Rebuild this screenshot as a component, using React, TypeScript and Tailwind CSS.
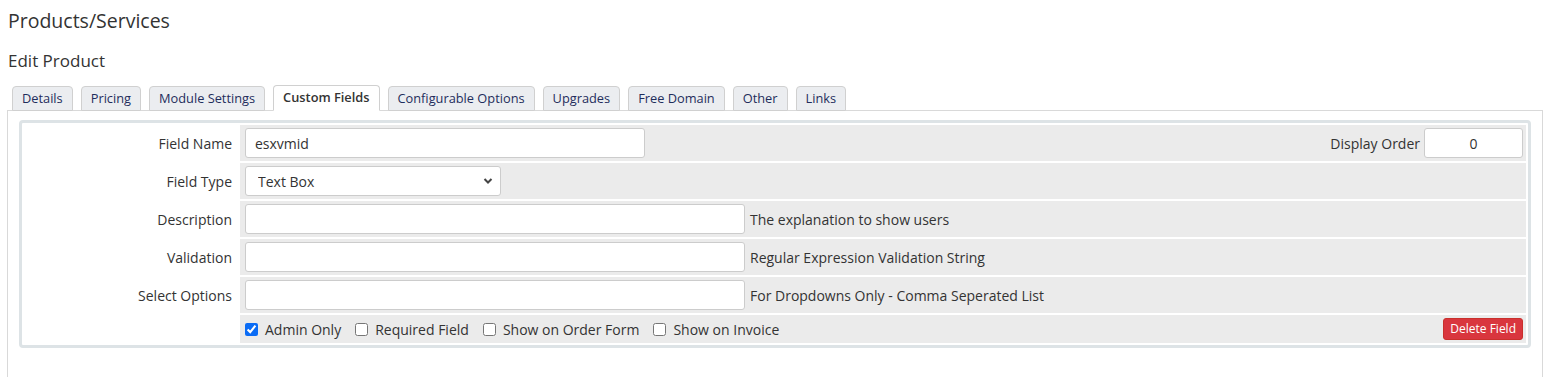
import React from "react";

const tabs = [
  "Details",
  "Pricing",
  "Module Settings",
  "Custom Fields",
  "Configurable Options",
  "Upgrades",
  "Free Domain",
  "Other",
  "Links",
];

const Row = ({ label, children, tall = true }: { label: string; children: React.ReactNode; tall?: boolean }) => (
  <div className={`flex gap-[2px] ${tall ? "h-[36px]" : "h-[28px]"}`}>
    <div className="w-[214px] shrink-0 flex items-center justify-end pr-[6px] bg-white">{label}</div>
    <div className="flex-1 flex items-center bg-[#ebebeb] pl-[5px] pr-[3px]">{children}</div>
  </div>
);

const TextInput = ({ value = "", width }: { value?: string; width: string }) => (
  <input
    type="text"
    defaultValue={value}
    className={`${width} h-[30px] bg-white border border-[#cccccc] rounded-[3px] px-[9px] text-[14px] text-[#333] outline-none`}
  />
);

const Check = ({ label, checked = false }: { label: string; checked?: boolean }) => (
  <label className="flex items-center gap-[7px] mr-[14px]">
    <input type="checkbox" defaultChecked={checked} className="w-[13px] h-[13px] m-0 accent-[#0b6cf5]" />
    <span>{label}</span>
  </label>
);

export default function App() {
  return (
    <div className="bg-white text-[#333] text-[14px] min-h-[377px] pl-[7px] pr-[8px]" style={{ fontFamily: '"Open Sans", "Noto Sans", sans-serif' }}>
      {/* Header */}
      <h1 className="pl-[1px] pt-[7px] text-[19.5px] leading-[28px] font-normal">Products/Services</h1>
      <h2 className="pl-[1px] mt-[14px] text-[17px] leading-[24px] font-normal">Edit Product</h2>

      {/* Tabs */}
      <div className="mt-[12px] flex gap-[8px] pl-[5px] relative z-10 -mb-px">
        {tabs.map((t) =>
          t === "Custom Fields" ? (
            <div
              key={t}
              className="h-[26px] px-[9px] flex items-center border border-[#d0d0d0] border-b-white bg-white rounded-t-[4px] text-[12.8px] font-semibold text-[#333]"
            >
              {t}
            </div>
          ) : (
            <div
              key={t}
              className="h-[25px] mt-px px-[9px] flex items-center border border-[#d0d0d0] bg-[#ebedf0] rounded-t-[4px] text-[12.8px] text-[#1f2d5c]"
            >
              {t}
            </div>
          )
        )}
      </div>

      {/* Panel */}
      <div className="border-l border-r border-t border-[#d9d9d9] h-[280px] px-[11px] pt-[9px]">
        <div className="border-[3px] border-[#dde3e6] rounded-[4px] p-[2px] bg-white flex flex-col gap-[2px]">
          <Row label="Field Name">
            <TextInput value="esxvmid" width="w-[400px]" />
            <div className="ml-auto flex items-center gap-[4px]">
              <span>Display Order</span>
              <input
                type="text"
                defaultValue="0"
                className="w-[99px] h-[30px] bg-white border border-[#cccccc] rounded-[3px] text-center text-[14px] outline-none"
              />
            </div>
          </Row>
          <Row label="Field Type">
            <div className="relative w-[256px] h-[30px]">
              <select className="appearance-none w-full h-full bg-white border border-[#cccccc] rounded-[3px] pl-[12px] text-[14px] text-[#333] outline-none">
                <option>Text Box</option>
              </select>
              <svg className="absolute right-[8px] top-[11px] pointer-events-none" width="10" height="8" viewBox="0 0 10 8">
                <path d="M1.5 2 L5 5.5 L8.5 2" fill="none" stroke="#444" strokeWidth="2" />
              </svg>
            </div>
          </Row>
          <Row label="Description">
            <TextInput width="w-[500px]" />
            <span className="ml-[5px]">The explanation to show users</span>
          </Row>
          <Row label="Validation">
            <TextInput width="w-[500px]" />
            <span className="ml-[5px]">Regular Expression Validation String</span>
          </Row>
          <Row label="Select Options">
            <TextInput width="w-[500px]" />
            <span className="ml-[5px]">For Dropdowns Only - Comma Seperated List</span>
          </Row>
          <Row label="" tall={false}>
            <Check label="Admin Only" checked />
            <Check label="Required Field" />
            <Check label="Show on Order Form" />
            <Check label="Show on Invoice" />
            <button className="ml-auto h-[22px] px-[6px] bg-[#d9363e] border border-[#c9302c] rounded-[3px] text-white text-[12px] leading-none">
              Delete Field
            </button>
          </Row>
        </div>
      </div>
    </div>
  );
}
